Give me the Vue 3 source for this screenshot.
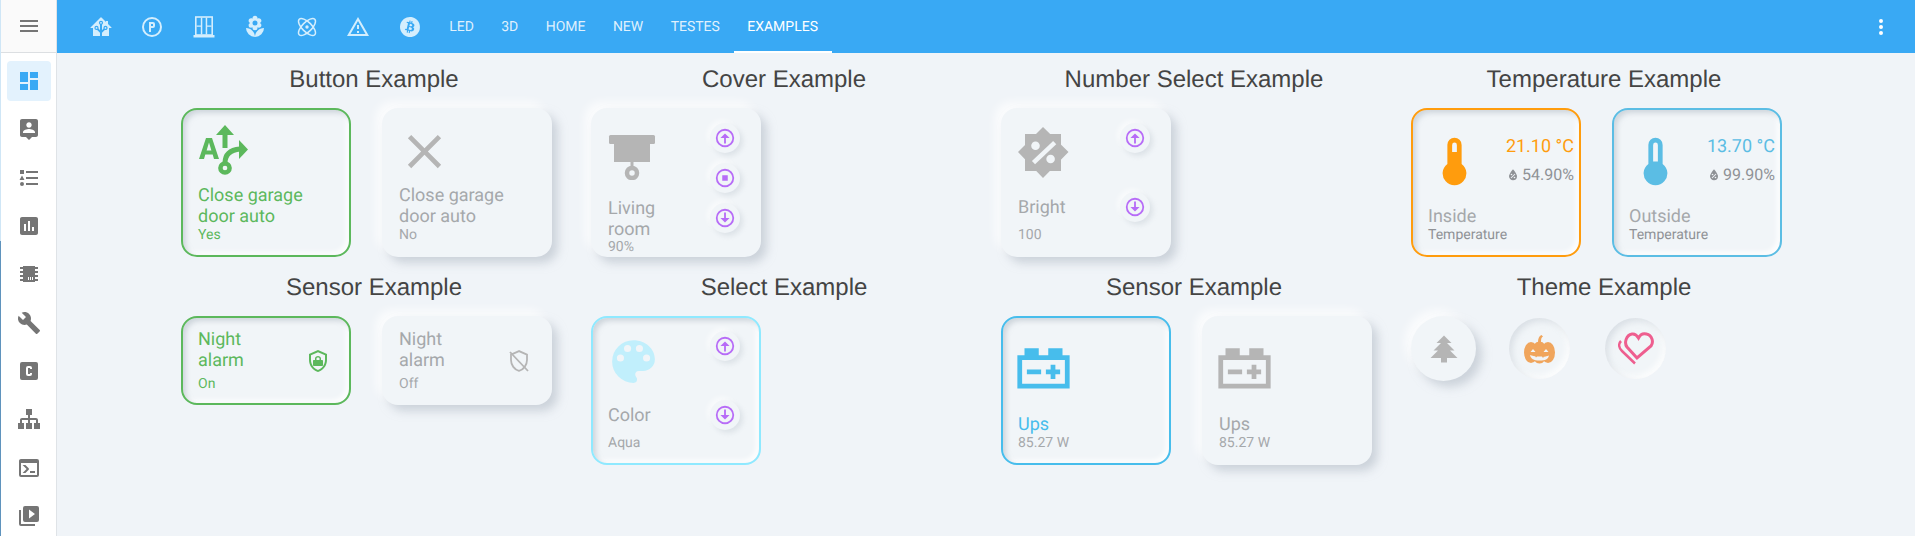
<template>
  <div class="app">
    <div class="edge"></div>
    <aside class="sidebar">
      <div class="side-head">
        <svg class="nav-icon" viewBox="0 0 24 24"><path :d="icons.menu" /></svg>
      </div>
      <nav class="side-nav">
        <div v-for="(d, i) in navIcons" :key="i" class="nav-item" :class="{ active: i === 0 }">
          <svg class="nav-icon" viewBox="0 0 24 24"><path :d="d" /></svg>
        </div>
      </nav>
    </aside>

    <div class="content">
      <header class="topbar">
        <div class="tabs">
          <div v-for="(d, i) in tabIcons" :key="i" class="tab icon-tab">
            <svg class="tab-icon" viewBox="0 0 24 24"><path :d="d" /></svg>
          </div>
          <div class="tab icon-tab">
            <svg class="tab-icon" viewBox="0 0 24 24">
              <rect x="3.800" y="2" width="16.400" height="18" fill="none" stroke="currentColor" stroke-width="1.600" />
              <path d="M1.500 20h21v2.400h-21zM8.800 2.500h1.500v17H8.800zM13.700 2.500h1.500v17h-1.500zM4.500 10.500h5v1.200h-5zM14.500 10.500h5v1.200h-5z" />
            </svg>
          </div>
          <div class="tab icon-tab">
            <svg class="tab-icon" viewBox="0 0 24 24"><path :d="icons.flower" /></svg>
          </div>
          <div class="tab icon-tab">
            <svg class="tab-icon" viewBox="0 0 24 24">
              <g fill="none" stroke="currentColor" stroke-width="1.500">
                <ellipse cx="12" cy="12" rx="11" ry="4.800" transform="rotate(45 12 12)" />
                <ellipse cx="12" cy="12" rx="11" ry="4.800" transform="rotate(-45 12 12)" />
              </g>
              <circle cx="12" cy="12" r="1.700" />
            </svg>
          </div>
          <div class="tab icon-tab">
            <svg class="tab-icon" viewBox="0 0 24 24"><path :d="icons.alert" /></svg>
          </div>
          <div class="tab icon-tab">
            <svg class="tab-icon" viewBox="0 0 24 24"><path :d="icons.bitcoin" /></svg>
          </div>
          <div v-for="t in tabs" :key="t" class="tab text-tab" :class="{ current: t === 'Examples' }">{{ t }}</div>
        </div>
        <svg class="dots" viewBox="0 0 24 24"><path :d="icons.dots" /></svg>
      </header>

      <main class="grid">
        <section class="col">
          <h2>Button Example</h2>
          <div class="cards">
            <div class="card on-green">
              <div class="body">
                <svg class="big" viewBox="0 0 57 57">
                  <path fill-rule="evenodd" d="M4 36 11 15h6l7 21h-5l-1.300-4.500H10.300L9 36zM11.600 27.500h4.800L14 19.500z" />
                  <path d="M30 2l9 10h-6.500v13h-5V12H21z" />
                  <path d="M30 40C30 32 34 27 45 26" fill="none" stroke="currentColor" stroke-width="5" />
                  <path d="M44 17l9 9.500L44 36z" />
                  <circle cx="30" cy="45" r="4.600" fill="none" stroke="currentColor" stroke-width="4.500" />
                </svg>
                <div class="texts">
                  <div class="name">Close garage door auto</div>
                  <div class="sub">Yes</div>
                </div>
              </div>
            </div>
            <div class="card">
              <div class="body">
                <svg class="big" viewBox="0 0 24 24"><path :d="icons.close" /></svg>
                <div class="texts">
                  <div class="name">Close garage door auto</div>
                  <div class="sub">No</div>
                </div>
              </div>
            </div>
          </div>
        </section>

        <section class="col">
          <h2>Cover Example</h2>
          <div class="cards">
            <div class="card">
              <div class="body">
                <svg class="big" viewBox="0 0 57 57">
                  <rect x="4" y="12" width="46" height="9" rx="1.500" />
                  <path d="M9 21h36v18H9zM25.500 39h3v6h-3z" />
                  <circle cx="27" cy="50" r="5" fill="none" stroke="currentColor" stroke-width="4.500" />
                </svg>
                <div class="texts overflow">
                  <div class="name narrow">Living room</div>
                  <div class="sub pull">90%</div>
                </div>
              </div>
              <div class="side tight">
                <div class="round"><svg viewBox="0 0 24 24"><path :d="icons.up" /></svg></div>
                <div class="round"><svg viewBox="0 0 24 24"><path :d="icons.stop" /></svg></div>
                <div class="round"><svg viewBox="0 0 24 24"><path :d="icons.down" /></svg></div>
              </div>
            </div>
          </div>
        </section>

        <section class="col">
          <h2>Number Select Example</h2>
          <div class="cards">
            <div class="card">
              <div class="body">
                <svg class="big low" viewBox="0 0 57 57">
                  <path d="M10 9h36v37H10zM28 2l25.500 25L28 53 3 27z" />
                  <circle cx="20.500" cy="20.700" r="4.300" fill="#f1f5f8" />
                  <circle cx="35.600" cy="34" r="4.300" fill="#f1f5f8" />
                  <path d="M18.500 37.700 39.700 17.700" stroke="#f1f5f8" stroke-width="4.500" />
                </svg>
                <div class="texts">
                  <div class="name">Bright</div>
                  <div class="sub spaced">100</div>
                </div>
              </div>
              <div class="side wide">
                <div class="round"><svg viewBox="0 0 24 24"><path :d="icons.up" /></svg></div>
                <div class="round"><svg viewBox="0 0 24 24"><path :d="icons.down" /></svg></div>
              </div>
            </div>
          </div>
        </section>

        <section class="col">
          <h2>Temperature Example</h2>
          <div class="cards">
            <div class="card temp on-orange">
              <div class="body">
                <div class="temp-top">
                  <svg class="big thermo" viewBox="0 0 24 24"><path :d="icons.thermoHigh" /></svg>
                  <div class="readings">
                    <div class="degrees">21.10 °C</div>
                    <div class="humidity"><svg viewBox="0 0 24 24"><path :d="icons.water" /></svg>54.90%</div>
                  </div>
                </div>
                <div class="texts">
                  <div class="name">Inside</div>
                  <div class="sub dark">Temperature</div>
                </div>
              </div>
            </div>
            <div class="card temp on-sky">
              <div class="body">
                <div class="temp-top">
                  <svg class="big thermo" viewBox="0 0 24 24"><path :d="icons.thermoLow" /></svg>
                  <div class="readings">
                    <div class="degrees">13.70 °C</div>
                    <div class="humidity"><svg viewBox="0 0 24 24"><path :d="icons.water" /></svg>99.90%</div>
                  </div>
                </div>
                <div class="texts">
                  <div class="name">Outside</div>
                  <div class="sub dark">Temperature</div>
                </div>
              </div>
            </div>
          </div>
        </section>

        <section class="col">
          <h2>Sensor Example</h2>
          <div class="cards">
            <div class="card short on-green">
              <div class="body">
                <div class="name narrow">Night alarm</div>
                <div class="sub gap5">On</div>
              </div>
              <svg class="shield" viewBox="0 0 24 24"><path :d="icons.shieldLock" /></svg>
            </div>
            <div class="card short">
              <div class="body">
                <div class="name narrow">Night alarm</div>
                <div class="sub gap5">Off</div>
              </div>
              <svg class="shield off" viewBox="0 0 24 24" stroke="currentColor" stroke-width="1.800">
                <path d="M12 2.100 4 5.700V11c0 5 3.400 9.700 8 10.900 4.600-1.200 8-5.900 8-10.900V5.700z" />
                <path d="M3 3l18 19" />
              </svg>
            </div>
          </div>
        </section>

        <section class="col">
          <h2>Select Example</h2>
          <div class="cards">
            <div class="card on-aqua">
              <div class="body">
                <svg class="big low palette" viewBox="0 0 24 24"><path :d="icons.palette" /></svg>
                <div class="texts">
                  <div class="name">Color</div>
                  <div class="sub spaced">Aqua</div>
                </div>
              </div>
              <div class="side wide">
                <div class="round"><svg viewBox="0 0 24 24"><path :d="icons.up" /></svg></div>
                <div class="round"><svg viewBox="0 0 24 24"><path :d="icons.down" /></svg></div>
              </div>
            </div>
          </div>
        </section>

        <section class="col">
          <h2>Sensor Example</h2>
          <div class="cards">
            <div class="card on-blue">
              <div class="body">
                <svg class="big lower" viewBox="0 0 24 24"><path :d="icons.battery" /></svg>
                <div class="texts">
                  <div class="name">Ups</div>
                  <div class="sub">85.27 W</div>
                </div>
              </div>
            </div>
            <div class="card">
              <div class="body">
                <svg class="big lower" viewBox="0 0 24 24"><path :d="icons.battery" /></svg>
                <div class="texts">
                  <div class="name">Ups</div>
                  <div class="sub">85.27 W</div>
                </div>
              </div>
            </div>
          </div>
        </section>

        <section class="col">
          <h2>Theme Example</h2>
          <div class="cards themes">
            <div class="theme raised">
              <svg class="tree" viewBox="0 0 24 24"><path :d="icons.pine" /></svg>
            </div>
            <div class="theme pressed">
              <svg class="pumpkin" viewBox="0 0 31 30">
                <path d="M14 8c0-3 1-6 3.500-7l1.500 1.500c-1.500.5-2 2.500-2 5.500z" />
                <ellipse cx="7" cy="18.500" rx="7" ry="10.500" />
                <ellipse cx="24" cy="18.500" rx="7" ry="10.500" />
                <ellipse cx="15.500" cy="18.500" rx="8" ry="11" />
                <path fill="#f1f5f8" d="M9 15l2.500 3h-5zM22 15l2.500 3h-5zM6 21c3 1 4 1.500 5 1l1 1.500 1-1h5l1 1.500 1-1.500c1 .5 2 0 5-1-1 4-3.500 5-9.500 5S7 25 6 21z" />
              </svg>
            </div>
            <div class="theme pressed">
              <svg class="hearts" viewBox="0 0 36 33" fill="none" stroke="#ee5e8f" stroke-width="3">
                <path d="M19 26 9 15C6 11 8 3 14 2c3-.5 5 1.500 6.500 4C22 3 25 1 28.500 2 34 3 36 10 33 14z" />
                <path d="M3 9c-3 3-2 7 1 10l13 12.500" stroke-width="2.500" />
              </svg>
            </div>
          </div>
        </section>
      </main>
    </div>
  </div>
</template>

<script setup>
const icons = {
  menu: 'M3,6H21V8H3V6M3,11H21V13H3V11M3,16H21V18H3V16Z',
  dots: 'M12,16A2,2 0 0,1 14,18A2,2 0 0,1 12,20A2,2 0 0,1 10,18A2,2 0 0,1 12,16M12,10A2,2 0 0,1 14,12A2,2 0 0,1 12,14A2,2 0 0,1 10,12A2,2 0 0,1 12,10M12,4A2,2 0 0,1 14,6A2,2 0 0,1 12,8A2,2 0 0,1 10,6A2,2 0 0,1 12,4Z',
  flower: 'M3,13A9,9 0 0,0 12,22C12,17 7.97,13 3,13M12,5.5A2.5,2.5 0 0,1 14.5,8A2.5,2.5 0 0,1 12,10.5A2.5,2.5 0 0,1 9.5,8A2.5,2.5 0 0,1 12,5.5M5.6,10.25A2.5,2.5 0 0,0 8.1,12.75C8.63,12.75 9.12,12.58 9.5,12.31C9.5,12.47 9.5,12.62 9.5,12.75A2.5,2.5 0 0,0 12,15.25A2.5,2.5 0 0,0 14.5,12.75C14.5,12.62 14.5,12.47 14.5,12.31C14.88,12.58 15.37,12.75 15.9,12.75C17.28,12.75 18.4,11.63 18.4,10.25C18.4,9.25 17.81,8.4 16.96,8C17.81,7.6 18.4,6.74 18.4,5.75C18.4,4.37 17.28,3.25 15.9,3.25C15.37,3.25 14.88,3.41 14.5,3.69C14.5,3.53 14.5,3.38 14.5,3.25A2.5,2.5 0 0,0 12,0.75A2.5,2.5 0 0,0 9.5,3.25C9.5,3.38 9.5,3.53 9.5,3.69C9.12,3.41 8.63,3.25 8.1,3.25A2.5,2.5 0 0,0 5.6,5.75C5.6,6.74 6.19,7.6 7.04,8C6.19,8.4 5.6,9.25 5.6,10.25M12,22A9,9 0 0,0 21,13C16,13 12,17 12,22Z',
  alert: 'M12,2L1,21H23M12,6L19.53,19H4.47M11,10V14H13V10M11,16V18H13V16',
  bitcoin: 'M14.24 10.56C13.93 11.8 12 11.17 11.4 11L11.95 8.82C12.57 9 14.56 9.26 14.24 10.56M11.13 12.12L10.53 14.53C11.27 14.72 13.56 15.45 13.9 14.09C14.26 12.67 11.87 12.3 11.13 12.12M21.7 14.42C20.36 19.78 14.94 23.04 9.58 21.7C4.22 20.36 .963 14.94 2.3 9.58C3.64 4.22 9.06 .964 14.42 2.3C19.77 3.64 23.03 9.06 21.7 14.42M14.21 8.05L14.66 6.25L13.56 6L13.12 7.73C12.83 7.66 12.54 7.59 12.24 7.53L12.68 5.76L11.59 5.5L11.14 7.29C10.9 7.23 10.66 7.18 10.44 7.12L10.44 7.12L8.93 6.74L8.63 7.91C8.63 7.91 9.45 8.1 9.43 8.11C9.88 8.22 9.96 8.5 9.94 8.75L8.71 13.68C8.66 13.82 8.5 14 8.21 13.95C8.22 13.96 7.41 13.75 7.41 13.75L6.87 15L8.29 15.36C8.56 15.43 8.82 15.5 9.08 15.56L8.62 17.38L9.71 17.66L10.16 15.85C10.46 15.93 10.75 16 11.03 16.08L10.58 17.87L11.68 18.15L12.14 16.33C14 16.68 15.42 16.54 16 14.85C16.5 13.5 16 12.7 15 12.19C15.72 12 16.26 11.55 16.41 10.57C16.61 9.24 15.59 8.53 14.21 8.05Z',
  close: 'M19,6.41L17.59,5L12,10.59L6.41,5L5,6.41L10.59,12L5,17.59L6.41,19L12,13.41L17.59,19L19,17.59L13.41,12L19,6.41Z',
  up: 'M12,20C7.59,20 4,16.41 4,12C4,7.59 7.59,4 12,4C16.41,4 20,7.59 20,12C20,16.41 16.41,20 12,20M12,22A10,10 0 0,0 22,12A10,10 0 0,0 12,2A10,10 0 0,0 2,12A10,10 0 0,0 12,22M13,12V18H11V12H7L12,7L17,12H13Z',
  down: 'M12,4C16.41,4 20,7.59 20,12C20,16.41 16.41,20 12,20C7.59,20 4,16.41 4,12C4,7.59 7.59,4 12,4M12,2A10,10 0 0,0 2,12A10,10 0 0,0 12,22A10,10 0 0,0 22,12A10,10 0 0,0 12,2M11,6V12H7L12,17L17,12H13V6H11Z',
  stop: 'M12,2A10,10 0 0,0 2,12A10,10 0 0,0 12,22A10,10 0 0,0 22,12A10,10 0 0,0 12,2M12,4C16.41,4 20,7.59 20,12C20,16.41 16.41,20 12,20C7.59,20 4,16.41 4,12C4,7.59 7.59,4 12,4M9,9V15H15V9',
  thermoHigh: 'M15 13V5A3 3 0 0 0 9 5V13A5 5 0 1 0 15 13M12 4A1 1 0 0 1 13 5V8H11V5A1 1 0 0 1 12 4Z',
  thermoLow: 'M15 13V5A3 3 0 0 0 9 5V13A5 5 0 1 0 15 13M12 4A1 1 0 0 1 13 5V12H11V5A1 1 0 0 1 12 4Z',
  water: 'M12,3.25C12,3.25 6,10 6,14C6,17.32 8.69,20 12,20A6,6 0 0,0 18,14C18,10 12,3.25 12,3.25M14.47,9.97L15.53,11.03L9.53,17.03L8.47,15.97M9.75,10A1.25,1.25 0 0,1 11,11.25A1.25,1.25 0 0,1 9.75,12.5A1.25,1.25 0 0,1 8.5,11.25A1.25,1.25 0 0,1 9.75,10M14.25,14.5A1.25,1.25 0 0,1 15.5,15.75A1.25,1.25 0 0,1 14.25,17A1.25,1.25 0 0,1 13,15.75A1.25,1.25 0 0,1 14.25,14.5Z',
  shieldLock: 'M12,1L3,5V11C3,16.55 6.84,21.74 12,23C17.16,21.74 21,16.55 21,11V5L12,1M19,11C19,15.52 16,19.69 12,20.93C8,19.69 5,15.52 5,11V6.3L12,3.18L19,6.3V11M16,11H15V9.5C15,8 13.5,7 12,7C10.5,7 9,8 9,9.5V11H8C7.45,11 7,11.45 7,12V16C7,16.55 7.45,17 8,17H16C16.55,17 17,16.55 17,16V12C17,11.45 16.55,11 16,11M13.5,11H10.5V9.5C10.5,8.7 11.2,8.5 12,8.5C12.8,8.5 13.5,8.7 13.5,9.5V11Z',
  palette: 'M17.5,12A1.5,1.5 0 0,1 16,10.5A1.5,1.5 0 0,1 17.5,9A1.5,1.5 0 0,1 19,10.5A1.5,1.5 0 0,1 17.5,12M14.5,8A1.5,1.5 0 0,1 13,6.5A1.5,1.5 0 0,1 14.5,5A1.5,1.5 0 0,1 16,6.5A1.5,1.5 0 0,1 14.5,8M9.5,8A1.5,1.5 0 0,1 8,6.5A1.5,1.5 0 0,1 9.5,5A1.5,1.5 0 0,1 11,6.5A1.5,1.5 0 0,1 9.5,8M6.5,12A1.5,1.5 0 0,1 5,10.5A1.5,1.5 0 0,1 6.5,9A1.5,1.5 0 0,1 8,10.5A1.5,1.5 0 0,1 6.5,12M12,3A9,9 0 0,0 3,12A9,9 0 0,0 12,21A1.5,1.5 0 0,0 13.5,19.5C13.5,19.11 13.35,18.76 13.11,18.5C12.88,18.23 12.73,17.88 12.73,17.5A1.5,1.5 0 0,1 14.23,16H16A5,5 0 0,0 21,11C21,6.58 16.97,3 12,3Z',
  battery: 'M4,3V6H1V20H23V6H20V3H14V6H10V3H4M3,8H21V18H3V8M15,10V12H13V14H15V16H17V14H19V12H17V10H15M5,12V14H11V12H5Z',
  pine: 'M10,21V18H3L8,13H5L10,8H7L12,3L17,8H14L19,13H16L21,18H14V21H10Z',
}

const navIcons = [
  'M13,3V9H21V3M13,21H21V11H13M3,21H11V15H3M3,13H11V3H3V13Z',
  'M19 2H5c-1.11 0-2 .9-2 2v14c0 1.1.89 2 2 2h4l3 3 3-3h4c1.1 0 2-.9 2-2V4c0-1.1-.9-2-2-2zm-7 3.3c1.49 0 2.7 1.21 2.7 2.7 0 1.49-1.21 2.7-2.7 2.7-1.49 0-2.7-1.21-2.7-2.7 0-1.49 1.21-2.7 2.7-2.7zM18 16H6v-.9c0-2 4-3.100 6-3.100s6 1.100 6 3.100v.9z',
  'M5,9.5L7.5,14H2.5L5,9.5M3,4H7V8H3V4M5,20A2,2 0 0,0 7,18A2,2 0 0,0 5,16A2,2 0 0,0 3,18A2,2 0 0,0 5,20M9,5V7H21V5H9M9,19H21V17H9V19M9,13H21V11H9V13Z',
  'M19 3H5C3.900 3 3 3.900 3 5V19C3 20.100 3.900 21 5 21H19C20.100 21 21 20.100 21 19V5C21 3.900 20.100 3 19 3M9 17H7V10H9V17M13 17H11V7H13V17M17 17H15V13H17V17Z',
  'M6,4H18V5H21V7H18V9H21V11H18V13H21V15H18V17H21V19H18V20H6V19H3V17H6V15H3V13H6V11H3V9H6V7H3V5H6V4M11,15V18H12V15H11M13,15V18H14V15H13M15,15V18H16V15H15Z',
  'M22.7,19L13.6,9.9C14.5,7.6 14,4.9 12.1,3C10.1,1 7.1,0.6 4.7,1.7L9,6L6,9L1.6,4.7C0.4,7.1 0.9,10.1 2.9,12.1C4.8,14 7.5,14.5 9.8,13.6L18.9,22.7C19.3,23.1 19.9,23.1 20.3,22.7L22.6,20.4C23.1,20 23.1,19.3 22.7,19Z',
  'M11,7A2,2 0 0,0 9,9V15A2,2 0 0,0 11,17H13A2,2 0 0,0 15,15V14H13V15H11V9H13V10H15V9A2,2 0 0,0 13,7H11M5,3H19A2,2 0 0,1 21,5V19A2,2 0 0,1 19,21H5A2,2 0 0,1 3,19V5A2,2 0 0,1 5,3Z',
  'M9,2V8H11V11H5C3.89,11 3,11.89 3,13V16H1V22H7V16H5V13H11V16H9V22H15V16H13V13H19V16H17V22H23V16H21V13C21,11.89 20.1,11 19,11H13V8H15V2H9Z',
  'M20,19V7H4V19H20M20,3A2,2 0 0,1 22,5V19A2,2 0 0,1 20,21H4A2,2 0 0,1 2,19V5C2,3.89 2.9,3 4,3H20M13,17V15H18V17H13M9.58,13L5.57,9H8.4L11.7,12.3C12.09,12.69 12.09,13.33 11.7,13.72L8.42,17H5.59L9.58,13Z',
  'M4,6H2V20A2,2 0 0,0 4,22H18V20H4V6M20,2H8A2,2 0 0,0 6,4V16A2,2 0 0,0 8,18H20A2,2 0 0,0 22,16V4A2,2 0 0,0 20,2M12,14.5V5.5L18,10L12,14.5Z',
]

const tabIcons = [
  'M21.8,13H20V21H13V17.67L15.79,14.88L16.5,15C17.66,15 18.6,14.06 18.6,12.9C18.6,11.74 17.66,10.8 16.5,10.8A2.1,2.1 0 0,0 14.4,12.9L14.5,13.61L13,15.13V9.65C13.66,9.29 14.1,8.6 14.1,7.8A2.1,2.1 0 0,0 12,5.7A2.1,2.1 0 0,0 9.9,7.8C9.9,8.6 10.34,9.29 11,9.65V15.13L9.5,13.61L9.6,12.9A2.1,2.1 0 0,0 7.5,10.8A2.1,2.1 0 0,0 5.4,12.9A2.1,2.1 0 0,0 7.5,15L8.21,14.88L11,17.67V21H4V13H2.25C1.83,13 1.42,13 1.42,12.79C1.43,12.57 1.85,12.15 2.28,11.72L11,3C11.33,2.67 11.67,2.33 12,2.33C12.33,2.33 12.67,2.67 13,3L17,7V6H19V9L21.78,11.78C22.18,12.18 22.59,12.59 22.6,12.8C22.6,13 22.2,13 21.8,13M7.5,12A0.9,0.9 0 0,1 8.4,12.9A0.9,0.9 0 0,1 7.5,13.8A0.9,0.9 0 0,1 6.6,12.9A0.9,0.9 0 0,1 7.5,12M16.5,12C17,12 17.4,12.4 17.4,12.9C17.4,13.4 17,13.8 16.5,13.8A0.9,0.9 0 0,1 15.6,12.9A0.9,0.9 0 0,1 16.5,12M12,6.9C12.5,6.9 12.9,7.3 12.9,7.8C12.9,8.3 12.5,8.7 12,8.7C11.5,8.7 11.1,8.3 11.1,7.8C11.1,7.3 11.5,6.9 12,6.9Z',
  'M9,7H13A2,2 0 0,1 15,9V11A2,2 0 0,1 13,13H11V17H9V7M11,9V11H13V9H11M12,2A10,10 0 0,1 22,12A10,10 0 0,1 12,22A10,10 0 0,1 2,12A10,10 0 0,1 12,2M12,4A8,8 0 0,0 4,12A8,8 0 0,0 12,20A8,8 0 0,0 20,12A8,8 0 0,0 12,4Z',
]

const tabs = ['Led', '3D', 'Home', 'New', 'Testes', 'Examples']
</script>

<style>
html, body { margin: 0; height: 100%; overflow: hidden; }
</style>

<style scoped>
.app {
  display: flex; width: 1915px; height: 536px; overflow: hidden;
  background: #f0f4f8; font-family: Roboto, "Liberation Sans", sans-serif;
  text-rendering: geometricPrecision;
}
.edge {
  flex: none; width: 1px;
  background: linear-gradient(#cfe6f6 0 241px, #5f93bd 241px);
}

/* left drawer */
.sidebar { flex: none; width: 55px; background: #fff; border-right: 1px solid #dfe3e7; }
.side-head {
  height: 52px; background: #fafafa; border-bottom: 1px solid #dcdfe2;
  display: flex; align-items: center; justify-content: center;
}
.side-nav { display: flex; flex-direction: column; align-items: center; padding-top: 8px; }
.nav-item {
  width: 44px; height: 40px; flex: none; margin-bottom: 8.35px; border-radius: 4px;
  display: flex; align-items: center; justify-content: center; color: #757575;
}
.nav-item.active { background: #e3f2fd; color: #39a9f4; }
.nav-icon { width: 24px; height: 24px; fill: currentColor; }
.side-head .nav-icon { fill: #757575; }

/* top bar */
.content { flex: 1; min-width: 0; display: flex; flex-direction: column; }
.topbar {
  height: 53px; flex: none; background: #39a9f4; color: #fff;
  display: flex; align-items: stretch; justify-content: space-between;
  padding: 0 22px 0 18px;
}
.tabs { display: flex; }
.tab { display: flex; align-items: center; position: relative; color: rgba(255,255,255,.85); }
.icon-tab { width: 51.5px; justify-content: center; }
.tab-icon { width: 24px; height: 24px; fill: currentColor; color: #d4eefd; }
.text-tab {
  padding: 0 13.7px; font-size: 14px; font-weight: 400; text-transform: uppercase;
}
.text-tab.current { color: #fff; border-bottom: 2px solid #fff; box-sizing: border-box; padding-top: 2px; }
.dots { width: 24px; height: 24px; fill: #fff; align-self: center; }

/* page grid */
.grid {
  display: grid; grid-template-columns: repeat(4, 410px); grid-auto-rows: min-content;
  row-gap: 4px; padding-left: 112px;
}
h2 {
  margin: 0; height: 55px; box-sizing: border-box; padding-top: 13px;
  font: 400 24px/28px "Liberation Sans", Arial, sans-serif; color: #444; text-align: center;
}
.cards { display: flex; gap: 31px; padding-left: 12px; }

.card {
  width: 170px; height: 149px; flex: none; box-sizing: border-box;
  border: 2px solid transparent; border-radius: 16px; padding: 13px 15px 12px;
  display: flex; color: #b5b5b5; background: #f1f5f8;
  box-shadow: 6px 6px 10px rgba(174,184,194,.55), -6px -6px 10px rgba(255,255,255,.75);
}
.card[class*="on-"] {
  box-shadow: inset 3px 3px 5px rgba(174,184,194,.5), inset -3px -3px 5px rgba(255,255,255,.9);
}
.on-green { border-color: #5cb85c; color: #5cb85c; }
.on-orange { border-color: #ff9c0d; color: #ff9c0d; }
.on-sky { border-color: #5bbde4; color: #5bbde4; }
.on-blue { border-color: #47bdec; color: #47bdec; }
.on-aqua { border-color: #8fe9ff; }
.card.short { height: 89px; padding: 10px 15px 10px; align-items: center; }

.body { flex: 1; min-width: 0; display: flex; flex-direction: column; }
.big { width: 57px; height: 57px; flex: none; fill: currentColor; margin-left: -3px; }
.low { margin-top: 2px; }
.lower { margin-top: 10px; }
.palette { color: #c1effc; }
.texts { margin-top: auto; }
.overflow { margin-bottom: -12px; }
.name { font-size: 18px; line-height: 21px; color: #a5a8ab; }
.sub { font-size: 14px; line-height: 16px; color: #a5a8ab; }
.narrow { max-width: 80px; }
.spaced { margin-top: 9px; }
.gap5 { margin-top: 5px; }
.pull { margin-top: -1px; }
.on-green .name, .on-green .sub { color: #5cb85c; }
.on-blue .name { color: #47bdec; }
.dark { color: #8f9296; }

.side { flex: none; width: 30px; margin-right: 4px; display: flex; flex-direction: column; }
.tight { gap: 10px; }
.wide { gap: 39px; }
.round {
  width: 30px; height: 30px; border-radius: 50%; background: #f1f5f8;
  display: flex; align-items: center; justify-content: center;
  box-shadow: 3px 3px 5px rgba(174,184,194,.3), -3px -3px 5px rgba(255,255,255,.55);
}
.round svg { width: 22px; height: 22px; fill: #b76cf7; }

.temp { padding-right: 5px; }
.temp-top { display: flex; justify-content: space-between; }
.thermo { margin-left: -2px; margin-top: 10px; }
.readings { text-align: right; padding-top: 13px; }
.degrees { font-size: 18px; line-height: 21px; }
.humidity {
  margin-top: 7px; font-size: 16px; line-height: 21px; color: #8f9296;
  display: flex; align-items: center; justify-content: flex-end; white-space: nowrap;
}
.humidity svg { width: 16px; height: 16px; fill: currentColor; margin-right: 1px; }

.shield { width: 24px; height: 24px; flex: none; margin-right: 4px; fill: currentColor; }
.shield.off { fill: none; }

.themes { gap: 31px; }
.theme {
  width: 65px; height: 65px; flex: none; box-sizing: border-box; border-radius: 50%;
  display: flex; align-items: center; justify-content: center; background: #f1f5f8;
}
.raised { box-shadow: 6px 6px 10px rgba(174,184,194,.55), -6px -6px 10px rgba(255,255,255,.75); }
.pressed {
  width: 61px; height: 61px; margin: 2px;
  box-shadow: inset 3px 3px 6px rgba(174,184,194,.35), inset -3px -3px 6px rgba(255,255,255,.9);
}
.tree { width: 36px; height: 36px; fill: #b5b5b5; }
.pumpkin { width: 31px; height: 30px; fill: #f0a55c; }
.hearts { width: 36px; height: 33px; }
</style>
